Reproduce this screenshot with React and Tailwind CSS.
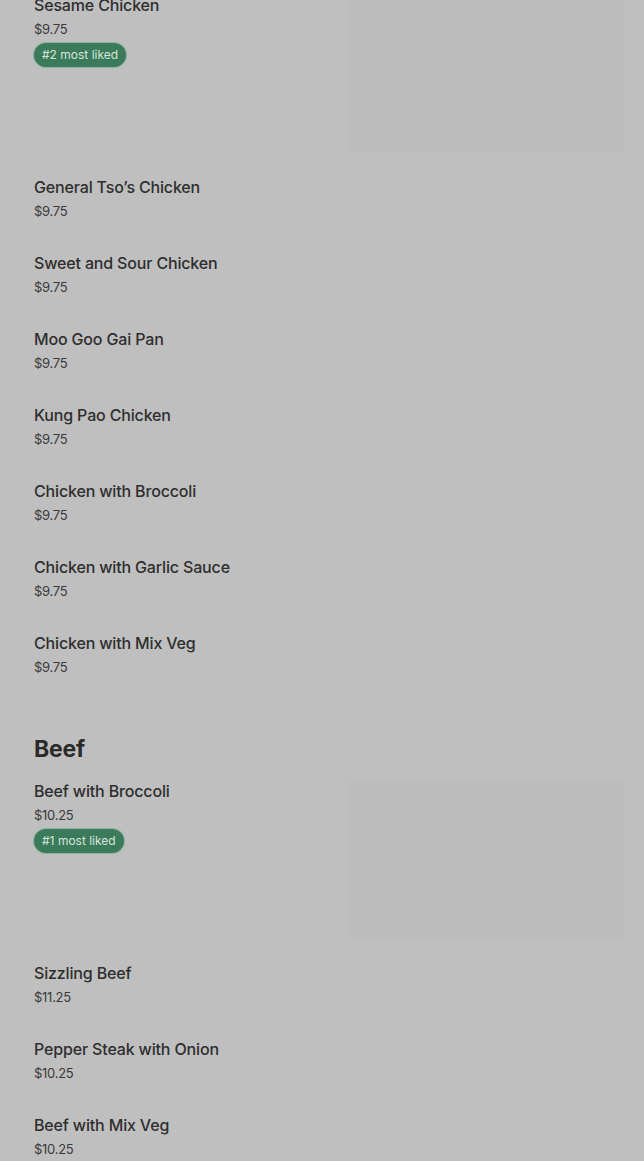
import React from "react";

const chicken = [
  { name: "General Tso’s Chicken", price: "$9.75" },
  { name: "Sweet and Sour Chicken", price: "$9.75" },
  { name: "Moo Goo Gai Pan", price: "$9.75" },
  { name: "Kung Pao Chicken", price: "$9.75" },
  { name: "Chicken with Broccoli", price: "$9.75" },
  { name: "Chicken with Garlic Sauce", price: "$9.75" },
  { name: "Chicken with Mix Veg", price: "$9.75" },
];

const beef = [
  { name: "Sizzling Beef", price: "$11.25" },
  { name: "Pepper Steak with Onion", price: "$10.25" },
  { name: "Beef with Mix Veg", price: "$10.25" },
];

function Text({ name, price }) {
  return (
    <div className="flex flex-col">
      <div className="text-[16px] leading-[22px] font-medium tracking-[-0.01em] text-[#2e2e2e]">{name}</div>
      <div className="mt-[4px] text-[13px] leading-[18px] tracking-[-0.02em] text-[#3a3a3a]">{price}</div>
    </div>
  );
}

function Regular({ item }) {
  return (
    <div className="h-[76px]">
      <Text {...item} />
    </div>
  );
}

function Featured({ name, price, rank }) {
  return (
    <div className="h-[182px] flex justify-between">
      <div className="flex flex-col items-start">
        <Text name={name} price={price} />
        <div className="mt-[5px] h-[24px] px-[8px] rounded-full bg-[#3b7b5b] text-[12px] leading-[24px] text-[#d5e5da] shadow-[0_0_0_1px_#8fb39e]">
          #{rank} most liked
        </div>
      </div>
      <div className="w-[276px] h-[158px] bg-[#bcbcbc] border-l-[4px] border-b-[4px] border-[#bdbdbd]" />
    </div>
  );
}

export default function App() {
  return (
    <div
      className="w-[644px] min-h-[1161px] bg-[#bfbfbf] overflow-hidden"
      style={{ fontFamily: "Inter, 'Noto Sans', sans-serif" }}
    >
      <div className="pl-[34px] pr-[20px] -mt-[6px]">
        <Featured name="Sesame Chicken" price="$9.75" rank={2} />
        {chicken.map((it) => (
          <Regular key={it.name} item={it} />
        ))}
        <div className="mt-[25px] mb-[15px] text-[23px] leading-[32px] font-bold tracking-[-0.01em] text-[#2a2a2a]">Beef</div>
        <Featured name="Beef with Broccoli" price="$10.25" rank={1} />
        {beef.map((it) => (
          <Regular key={it.name} item={it} />
        ))}
      </div>
    </div>
  );
}
